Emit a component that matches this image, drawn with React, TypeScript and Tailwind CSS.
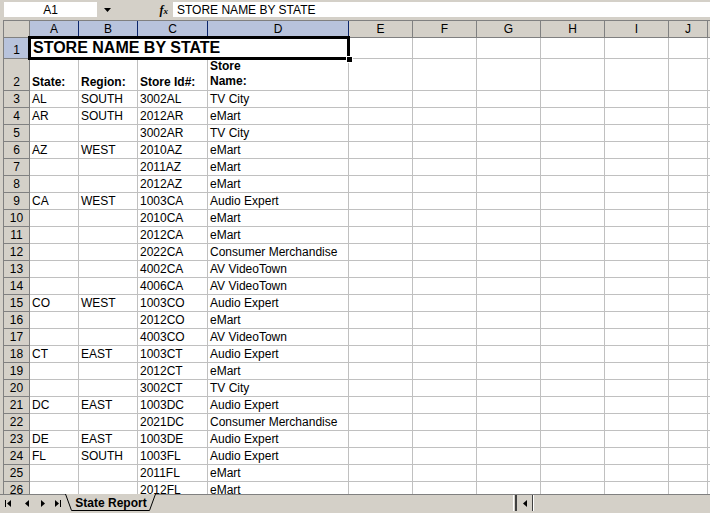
import React from "react";

const font = { fontFamily: '"Liberation Sans", Arial, sans-serif' };

const cols = ["A", "B", "C", "D", "E", "F", "G", "H", "I", "J"];
const colW = [49, 59, 70, 141, 64, 64, 64, 64, 64, 39];

const data: [string, string, string, string][] = [
  ["AL", "SOUTH", "3002AL", "TV City"],
  ["AR", "SOUTH", "2012AR", "eMart"],
  ["", "", "3002AR", "TV City"],
  ["AZ", "WEST", "2010AZ", "eMart"],
  ["", "", "2011AZ", "eMart"],
  ["", "", "2012AZ", "eMart"],
  ["CA", "WEST", "1003CA", "Audio Expert"],
  ["", "", "2010CA", "eMart"],
  ["", "", "2012CA", "eMart"],
  ["", "", "2022CA", "Consumer Merchandise"],
  ["", "", "4002CA", "AV VideoTown"],
  ["", "", "4006CA", "AV VideoTown"],
  ["CO", "WEST", "1003CO", "Audio Expert"],
  ["", "", "2012CO", "eMart"],
  ["", "", "4003CO", "AV VideoTown"],
  ["CT", "EAST", "1003CT", "Audio Expert"],
  ["", "", "2012CT", "eMart"],
  ["", "", "3002CT", "TV City"],
  ["DC", "EAST", "1003DC", "Audio Expert"],
  ["", "", "2021DC", "Consumer Merchandise"],
  ["DE", "EAST", "1003DE", "Audio Expert"],
  ["FL", "SOUTH", "1003FL", "Audio Expert"],
  ["", "", "2011FL", "eMart"],
  ["", "", "2012FL", "eMart"],
];

function RowHeader({ n, h, selected }: { n: number; h: string; selected?: boolean }) {
  return (
    <div
      className={`${h} w-[26px] shrink-0 flex items-end justify-center pb-[1px] border-b border-r border-b-[#808080] ${
        selected ? "bg-[#b8c3dc] border-r-[#0a246a]" : "bg-[#d4d0c8] border-r-[#808080]"
      } text-[12px] text-black leading-[14px]`}
    >
      {n}
    </div>
  );
}

function Cell({ w, h, children, bold }: { w: number; h: string; children?: React.ReactNode; bold?: boolean }) {
  return (
    <div
      className={`${h} shrink-0 border-r border-b border-[#c0c0c0] bg-white pl-[2px] text-[12px] leading-[14px] text-black whitespace-nowrap overflow-visible flex items-end pb-[1px] ${
        bold ? "font-bold" : ""
      }`}
      style={{ width: w }}
    >
      {children}
    </div>
  );
}

export default function App() {
  return (
    <div className="w-[710px] h-[513px] bg-[#d4d0c8] flex flex-col overflow-hidden" style={font}>
      {/* Formula bar */}
      <div className="h-[20px] shrink-0 flex items-start pt-[2px] pl-[4px]">
        <div className="w-[93px] h-[15px] bg-white flex items-center justify-center text-[12px] leading-[14px] text-black">
          A1
        </div>
        <div className="w-[20px] h-[15px] flex items-center justify-center">
          <svg width="7" height="4" viewBox="0 0 7 4">
            <path d="M0 0h7L3.5 4z" fill="#000" />
          </svg>
        </div>
        <div className="w-[56px] h-[15px] flex items-center justify-end pr-[5px]">
          <span className="text-[12px] italic font-bold text-black" style={{ fontFamily: '"Liberation Serif", serif' }}>
            f<span className="text-[9px]">x</span>
          </span>
        </div>
        <div className="flex-1 h-[15px] bg-white flex items-center pl-[4px] text-[12px] leading-[14px] text-black">
          STORE NAME BY STATE
        </div>
      </div>

      {/* Grid */}
      <div className="flex-1 overflow-hidden ml-[3px] border-l border-t border-[#808080] bg-white">
        {/* Column headers */}
        <div className="flex">
          <div className="h-[17px] w-[26px] shrink-0 bg-[#d4d0c8] border-r border-b border-[#808080]" />
          {cols.map((c, i) => {
            const sel = i < 4;
            return (
              <div
                key={c}
                className={`h-[17px] shrink-0 flex items-center justify-center text-[12px] leading-[14px] text-black border-r border-b ${
                  sel ? "bg-[#b8c3dc] border-[#0a246a]" : "bg-[#d4d0c8] border-[#808080]"
                }`}
                style={{ width: colW[i] }}
              >
                {c}
              </div>
            );
          })}
          <div className="h-[17px] flex-1 bg-[#d4d0c8] border-b border-[#808080]" />
        </div>

        {/* Row 1 */}
        <div className="flex">
          <RowHeader n={1} h="h-[21px]" selected />
          <div className="relative h-[21px] w-[319px] shrink-0 border-r border-b border-[#c0c0c0] bg-white flex items-center pl-[3px]">
            <span className="text-[16px] font-bold leading-[18px] text-black">STORE NAME BY STATE</span>
            <div className="absolute left-[-2px] top-[-2px] right-[-2px] bottom-[-2px] border-[3px] border-black" />
            <div className="absolute right-[-5px] bottom-[-5px] w-[7px] h-[7px] bg-black border border-white" />
          </div>
          {colW.slice(4).map((w, i) => (
            <Cell key={i} w={w} h="h-[21px]" />
          ))}
          <div className="h-[21px] flex-1 border-b border-[#c0c0c0]" />
        </div>

        {/* Row 2 */}
        <div className="flex">
          <RowHeader n={2} h="h-[32px]" />
          <Cell w={49} h="h-[32px]" bold>State:</Cell>
          <Cell w={59} h="h-[32px]" bold>Region:</Cell>
          <Cell w={70} h="h-[32px]" bold>Store Id#:</Cell>
          <Cell w={141} h="h-[32px]" bold>
            <span className="leading-[15px]">
              Store
              <br />
              Name:
            </span>
          </Cell>
          {colW.slice(4).map((w, i) => (
            <Cell key={i} w={w} h="h-[32px]" />
          ))}
          <div className="h-[32px] flex-1 border-b border-[#c0c0c0]" />
        </div>

        {data.map((r, ri) => (
          <div className="flex" key={ri}>
            <RowHeader n={ri + 3} h="h-[17px]" />
            {r.map((v, ci) => (
              <Cell key={ci} w={colW[ci]} h="h-[17px]">
                {v}
              </Cell>
            ))}
            {colW.slice(4).map((w, i) => (
              <Cell key={"e" + i} w={w} h="h-[17px]" />
            ))}
            <div className="h-[17px] flex-1 border-b border-[#c0c0c0]" />
          </div>
        ))}
      </div>

      {/* Tab bar */}
      <div className="h-[19px] shrink-0 flex items-start border-t border-[#808080] bg-[#d4d0c8]">
        <div className="w-[65px] h-[16px] flex items-center pl-[5px] gap-[10px]">
          <svg width="6" height="7" viewBox="0 0 6 7">
            <rect x="0" y="0" width="1" height="7" fill="#000" />
            <path d="M6 0v7L2 3.5z" fill="#000" />
          </svg>
          <svg width="4" height="7" viewBox="0 0 4 7" className="ml-[4px]">
            <path d="M4 0v7L0 3.5z" fill="#000" />
          </svg>
          <svg width="4" height="7" viewBox="0 0 4 7" className="ml-[2px]">
            <path d="M0 0v7L4 3.5z" fill="#000" />
          </svg>
          <svg width="6" height="7" viewBox="0 0 6 7">
            <path d="M0 0v7L4 3.5z" fill="#000" />
            <rect x="5" y="0" width="1" height="7" fill="#000" />
          </svg>
        </div>
        <div className="relative w-[91px] h-[17px] shrink-0 flex items-center justify-center">
          <svg className="absolute left-0 top-[-1px]" width="91" height="18" viewBox="0 0 91 18">
            <path d="M0.5 0 L6.5 16.5 H84.5 L90.5 0" fill="#d4d0c8" stroke="#000" strokeWidth="1" />
          </svg>
          <span className="relative text-[12px] font-bold text-black leading-[14px] pl-[1px] mt-[-1px]">State Report</span>
        </div>
        <div className="flex-1" />
        <div className="h-[17px] flex items-start">
          <div className="w-[4px] h-[16px] border-l border-white border-r-2 border-r-[#404040] mr-[1px]" />
          <div className="w-[15px] h-[16px] flex items-center justify-center border-r border-[#404040]">
            <svg width="4" height="7" viewBox="0 0 4 7">
              <path d="M4 0v7L0 3.5z" fill="#000" />
            </svg>
          </div>
          <div className="w-[177px] h-[16px] border-l border-white bg-[#d4d0c8]" />
        </div>
      </div>
    </div>
  );
}
